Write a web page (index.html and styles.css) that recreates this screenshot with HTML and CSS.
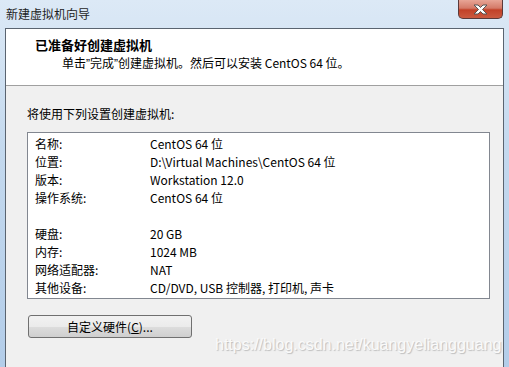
FILE: index.html
```html
<!DOCTYPE html>
<html lang="zh-CN">

<head>
	<meta charset="UTF-8">
	<meta name="viewport" content="width=device-width, initial-scale=1.0">
	<title>新建虚拟机向导</title>
	<link rel="stylesheet" href="styles.css">
</head>

<body>
	<div class="frame">
		<div class="titlebar">
			<span class="title">新建虚拟机向导</span>
			<div class="close">
				<svg width="17" height="11" viewBox="0 0 17 11">
					<path d="M2 1 H6 L8.5 3.5 L11 1 H15 L10.5 5.5 L15 10 H11 L8.5 7.5 L6 10 H2 L6.5 5.5 Z"
						fill="#fff" stroke="#555" stroke-width="1" stroke-linejoin="round" />
				</svg>
			</div>
		</div>

		<div class="client">
			<div class="header">
				<p class="heading">已准备好创建虚拟机</p>
				<p class="subheading">单击<span class="quote">”</span>完成<span class="quote">”</span>创建虚拟机。然后可以安装 CentOS 64 位。</p>
			</div>

			<div class="main">
				<p class="intro">将使用下列设置创建虚拟机:</p>

				<div class="listbox">
					<div class="row"><span class="label">名称:</span><span>CentOS 64 位</span></div>
					<div class="row"><span class="label">位置:</span><span>D:\Virtual Machines\CentOS 64 位</span></div>
					<div class="row"><span class="label">版本:</span><span>Workstation 12.0</span></div>
					<div class="row"><span class="label">操作系统:</span><span>CentOS 64 位</span></div>
					<div class="row"></div>
					<div class="row"><span class="label">硬盘:</span><span>20 GB</span></div>
					<div class="row"><span class="label">内存:</span><span>1024 MB</span></div>
					<div class="row"><span class="label">网络适配器:</span><span>NAT</span></div>
					<div class="row"><span class="label">其他设备:</span><span>CD/DVD, USB 控制器, 打印机, 声卡</span></div>
				</div>

				<button type="button" class="butn">自定义硬件(<u>C</u>)...</button>

				<div class="watermark">https://blog.csdn.net/kuangyeliangguang</div>
			</div>
		</div>
	</div>
</body>

</html>
```

FILE: styles.css
```css
body {
	margin: 0;
	background-color: #b4cde8;
	font-family: "Noto Sans CJK SC", "Noto Sans", sans-serif;
	font-size: 12px;
	color: #000;
}

p {
	margin: 0;
}

.frame {
	height: 367px;
	padding: 0 5px 0 5px;
	background: linear-gradient(to bottom, #dce9f6 0%, #c4d9ee 40%, #b3cde9 100%);
	overflow: hidden;
}

.titlebar {
	height: 28px;
	display: flex;
	align-items: flex-start;
}

.title {
	margin-top: 6px;
	margin-left: 1px;
	line-height: 16px;
	color: #1e1e1e;
}

.close {
	margin-left: auto;
	margin-right: 1px;
	width: 45px;
	height: 19px;
	border: 1px solid #5b3a3a;
	border-top: none;
	border-radius: 0 0 5px 5px;
	background: linear-gradient(to bottom, #e8a596 0%, #d47a68 45%, #c24128 55%, #cb5a40 100%);
	display: flex;
	align-items: center;
	justify-content: center;
	box-sizing: border-box;
}

.client {
	border: 1px solid #5a6470;
	border-bottom: none;
	height: 339px;
	display: flex;
	flex-direction: column;
}

.header {
	background-color: #fff;
	height: 57px;
	border-bottom: 1px solid #a0a0a0;
	box-sizing: border-box;
	padding: 8px 0 0 29px;
}

.heading {
	font-weight: bold;
	font-size: 13px;
	line-height: 16px;
}

.subheading {
	margin-top: 2px;
	margin-left: 27px;
	line-height: 16px;
}

.quote {
	font-family: "Liberation Sans", sans-serif;
}

.main {
	flex: 1;
	background-color: #f0f0f0;
	padding: 20px 0 0 21px;
	position: relative;
}

.intro {
	line-height: 16px;
}

.listbox {
	margin-top: 10px;
	width: 463px;
	height: 167px;
	box-sizing: border-box;
	background-color: #fff;
	border: 1px solid #828790;
	padding: 2px 0 0 7px;
}

.row {
	display: flex;
	height: 18px;
	line-height: 18px;
}

.label {
	width: 115px;
}

.butn {
	margin-top: 16px;
	margin-left: 1px;
	width: 164px;
	height: 23px;
	border: 1px solid #707070;
	border-radius: 3px;
	background: linear-gradient(to bottom, #f2f2f2 0%, #ebebeb 50%, #dddddd 51%, #cfcfcf 100%);
	font-family: inherit;
	font-size: 12px;
	padding: 0;
	color: #000;
}

.watermark {
	position: absolute;
	left: 209px;
	top: 250px;
	font-family: "Liberation Sans", Arial, sans-serif;
	font-size: 16px;
	color: #fafafa;
	text-shadow: 1px 1px 1px #bdbdbd;
}
```
